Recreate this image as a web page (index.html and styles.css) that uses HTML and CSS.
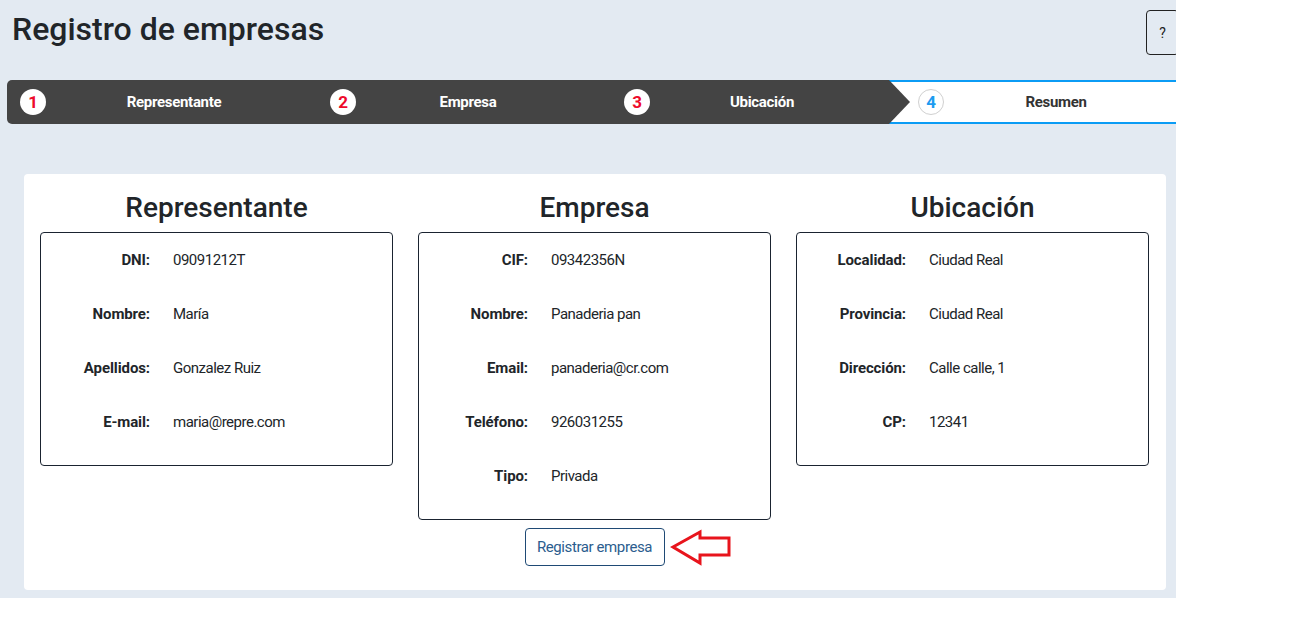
FILE: index.html
```html
<!DOCTYPE html>
<html lang="es">
<head>
<meta charset="utf-8">
<title>Registro de empresas</title>
<link rel="stylesheet" href="styles.css">
</head>
<body>
<div class="app">
  <header class="top">
    <h1 class="title">Registro de empresas</h1>
    <button class="help">?</button>
  </header>

  <nav class="stepper">
    <div class="step done first"><span class="num">1</span><span class="label">Representante</span></div>
    <div class="step done"><span class="num">2</span><span class="label">Empresa</span></div>
    <div class="step done arrow"><span class="num">3</span><span class="label">Ubicación</span></div>
    <div class="step active"><span class="num">4</span><span class="label">Resumen</span></div>
  </nav>

  <main class="card">
    <div class="cols">
      <section class="col">
        <h2 class="col-title">Representante</h2>
        <div class="box">
          <div class="row"><span class="k">DNI:</span><span class="v">09091212T</span></div>
          <div class="row"><span class="k">Nombre:</span><span class="v">María</span></div>
          <div class="row"><span class="k">Apellidos:</span><span class="v">Gonzalez Ruiz</span></div>
          <div class="row"><span class="k">E-mail:</span><span class="v">maria@repre.com</span></div>
        </div>
      </section>
      <section class="col">
        <h2 class="col-title">Empresa</h2>
        <div class="box">
          <div class="row"><span class="k">CIF:</span><span class="v">09342356N</span></div>
          <div class="row"><span class="k">Nombre:</span><span class="v">Panaderia pan</span></div>
          <div class="row"><span class="k">Email:</span><span class="v">panaderia@cr.com</span></div>
          <div class="row"><span class="k">Teléfono:</span><span class="v">926031255</span></div>
          <div class="row"><span class="k">Tipo:</span><span class="v">Privada</span></div>
        </div>
        <div class="actions">
          <button class="register">Registrar empresa</button>
          <svg class="pointer" width="62" height="38" viewBox="0 0 62 38" aria-hidden="true">
            <polygon points="3,18 30,3 30,9 59,9 59,26 30,26 30,34" fill="none" stroke="#e8141c" stroke-width="3" stroke-linejoin="miter"/>
          </svg>
        </div>
      </section>
      <section class="col">
        <h2 class="col-title">Ubicación</h2>
        <div class="box">
          <div class="row"><span class="k">Localidad:</span><span class="v">Ciudad Real</span></div>
          <div class="row"><span class="k">Provincia:</span><span class="v">Ciudad Real</span></div>
          <div class="row"><span class="k">Dirección:</span><span class="v">Calle calle, 1</span></div>
          <div class="row"><span class="k">CP:</span><span class="v">12341</span></div>
        </div>
      </section>
    </div>
  </main>
</div>
</body>
</html>
```

FILE: styles.css
```css
* { box-sizing: border-box; }

body {
  margin: 0;
  background: #ffffff;
  font-family: "Roboto", "Liberation Sans", sans-serif;
  color: #212529;
}

.app {
  width: 1176px;
  height: 598px;
  background: #e3eaf2;
  overflow: hidden;
  padding-top: 10px;
}

.top {
  display: flex;
  justify-content: space-between;
  align-items: flex-start;
  padding-left: 12px;
  margin-right: -3px;
  height: 70px;
}

.title {
  margin: 0;
  font-family: "Roboto", sans-serif;
  font-weight: 500;
  font-size: 32px;
  line-height: 38px;
  color: #212529;
}

.help {
  width: 33px;
  height: 45px;
  background: transparent;
  border: 1px solid #222;
  border-radius: 4px;
  font-family: "Roboto", sans-serif;
  font-size: 14px;
  color: #222;
  padding: 0;
}

.stepper {
  display: flex;
  margin-left: 7px;
  width: 1200px;
  height: 44px;
}

.step {
  flex: none;
  width: 294px;
  height: 44px;
  display: grid;
  align-items: center;
  background: #444444;
  position: relative;
}

.step.first { border-radius: 5px 0 0 5px; }

.step > * { grid-area: 1 / 1; }

.num {
  justify-self: start;
  margin-left: 29px;
  width: 26px;
  height: 26px;
  border-radius: 50%;
  background: #fff;
  color: #ee0a2b;
  font-weight: bold;
  font-size: 17px;
  line-height: 26px;
  letter-spacing: -0.5px;
  text-align: center;
}

.step.first .num { margin-left: 13px; }

.label {
  justify-self: stretch;
  text-align: center;
  padding-left: 40px;
  color: #fff;
  font-weight: bold;
  font-size: 15px;
  letter-spacing: -0.3px;
}

.step.arrow::after {
  content: "";
  position: absolute;
  left: 100%;
  top: 0;
  border-left: 21px solid #444444;
  border-top: 22px solid transparent;
  border-bottom: 22px solid transparent;
  z-index: 2;
}

.step.active {
  background: #fff;
  border-top: 2px solid #0b9cf5;
  border-bottom: 2px solid #0b9cf5;
}

.step.active .num {
  color: #1d9bf0;
  border: 1px solid #d0d0d0;
  line-height: 24px;
}

.step.active .label { color: #333; }

.card {
  margin: 50px 0 0 24px;
  width: 1142px;
  height: 416px;
  background: #fff;
  border-radius: 4px;
  padding: 17px 17px 0 16px;
}

.cols {
  display: grid;
  grid-template-columns: repeat(3, 353px);
  column-gap: 25px;
  align-items: start;
}

.col-title {
  margin: 0 0 7px;
  text-align: center;
  font-family: "Roboto", sans-serif;
  font-weight: 500;
  font-size: 28px;
  line-height: 34px;
  color: #212529;
}

.box {
  border: 1px solid #1a2330;
  border-radius: 4px;
  padding-bottom: 16px;
}

.row {
  display: grid;
  grid-template-columns: 109px 1fr;
  column-gap: 23px;
  align-items: center;
  height: 54px;
  font-size: 15px;
  line-height: 20px;
}

.k {
  text-align: right;
  font-weight: bold;
  letter-spacing: -0.1px;
  color: #212529;
}

.v {
  color: #212529;
  letter-spacing: -0.5px;
}

.actions {
  display: flex;
  justify-content: center;
  margin-top: 8px;
  position: relative;
}

.register {
  width: 140px;
  height: 38px;
  background: #fff;
  border: 1px solid #1f4a75;
  border-radius: 4px;
  color: #2b5d8e;
  font-family: "Roboto", sans-serif;
  font-size: 15px;
  letter-spacing: -0.4px;
  padding: 0;
}

.pointer {
  position: absolute;
  left: 252px;
  top: 1px;
}
```
